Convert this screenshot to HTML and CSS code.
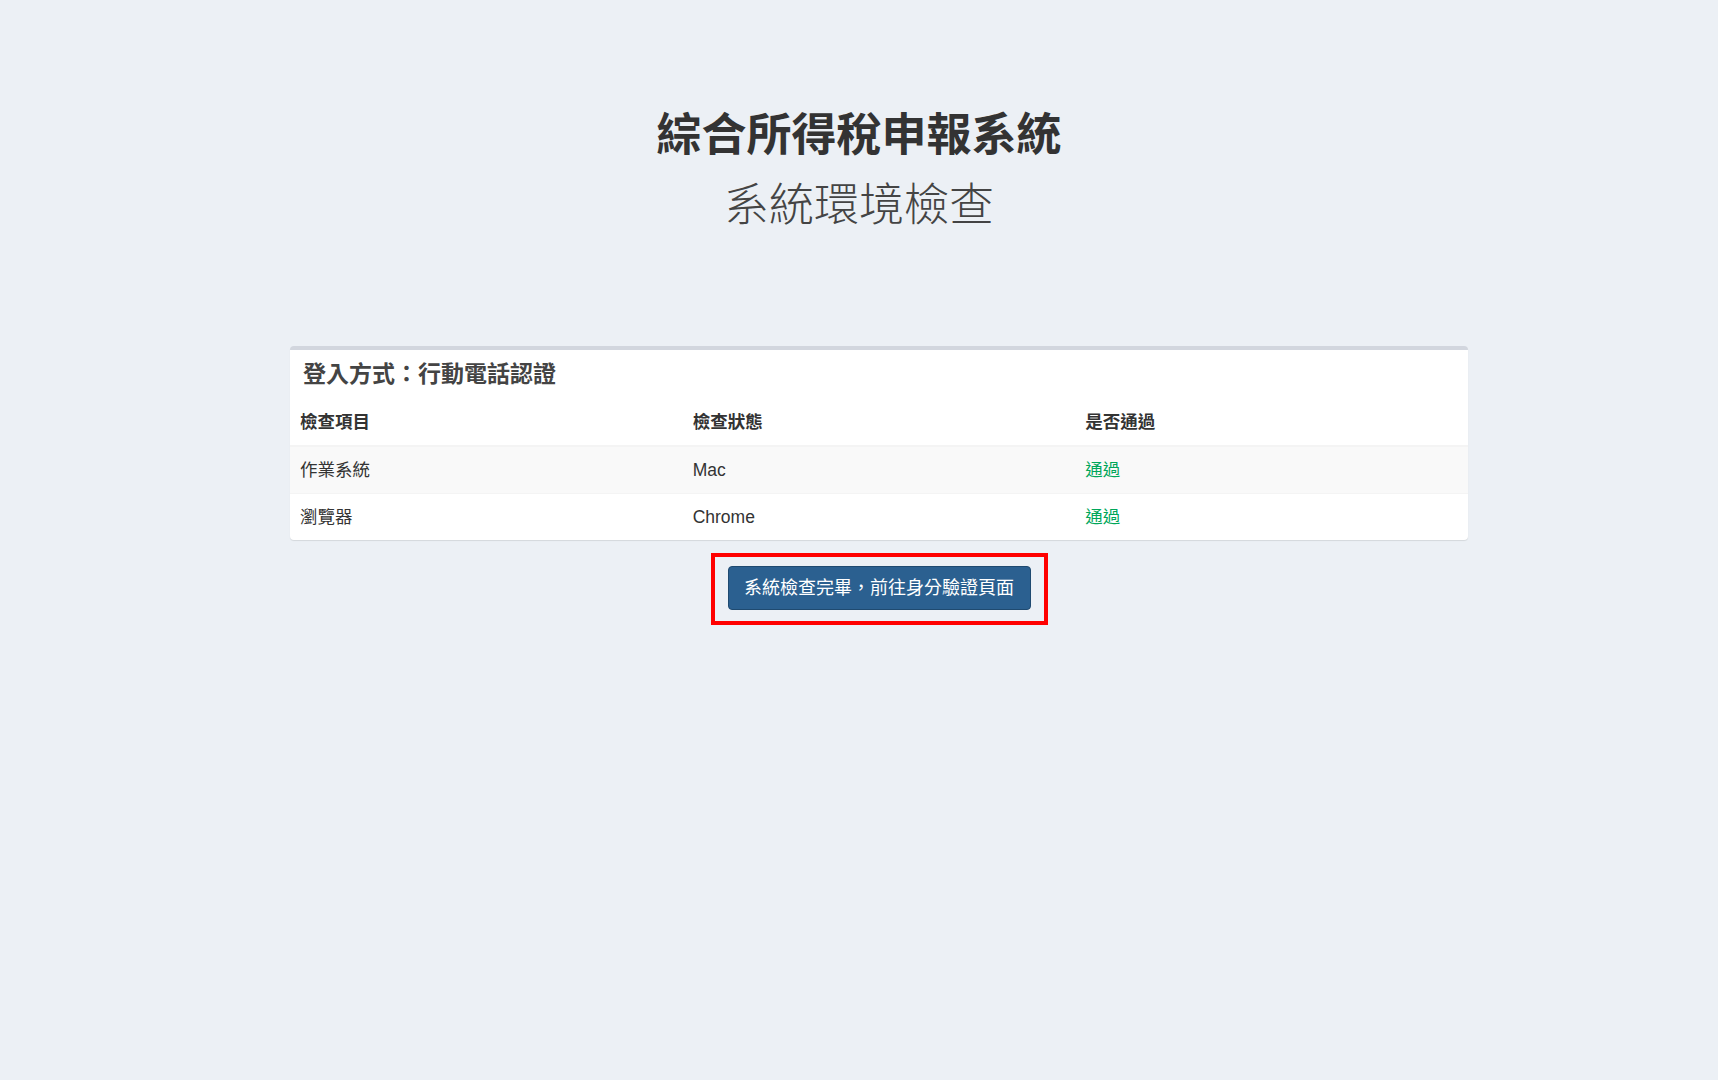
FILE: index.html
```html
<!DOCTYPE html>
<html lang="zh-Hant">
<head>
    <meta charset="UTF-8">
    <meta name="viewport" content="width=device-width, initial-scale=1.0">
    <title>綜合所得稅申報系統 - 系統環境檢查</title>
    <link rel="stylesheet" href="styles.css">
</head>
<body>

<header class="page-header">
    <h1 class="page-title">綜合所得稅申報系統</h1>
    <p class="page-subtitle">系統環境檢查</p>
</header>

<main class="content">
    <section class="box">
        <div class="box-header">
            <h3 class="box-title">登入方式：行動電話認證</h3>
        </div>
        <table class="check-table">
            <thead>
                <tr>
                    <th>檢查項目</th>
                    <th>檢查狀態</th>
                    <th>是否通過</th>
                </tr>
            </thead>
            <tbody>
                <tr>
                    <td>作業系統</td>
                    <td>Mac</td>
                    <td class="text-success">通過</td>
                </tr>
                <tr>
                    <td>瀏覽器</td>
                    <td>Chrome</td>
                    <td class="text-success">通過</td>
                </tr>
            </tbody>
        </table>
    </section>

    <div class="actions">
        <div class="highlight">
            <button type="button" class="btn-primary">系統檢查完畢，前往身分驗證頁面</button>
        </div>
    </div>
</main>

</body>
</html>
```

FILE: styles.css
```css
body {
    font-family: 'Liberation Sans', 'Noto Sans CJK TC', sans-serif;
    background-color: #ecf0f5;
    color: #333;
    margin: 0;
    padding: 0;
    font-size: 17.5px;
}

.page-header {
    text-align: center;
    padding-top: 111px;
}

.page-title {
    font-size: 45px;
    line-height: 50px;
    font-weight: bold;
    color: #333;
    margin: 0;
}

.page-subtitle {
    font-size: 45px;
    line-height: 50px;
    font-weight: 300;
    color: #444;
    margin: 20px 0 0;
}

.content {
    margin: 115px 0 0 290px;
    width: 1178px;
}

.box {
    background-color: #ffffff;
    border-top: 4px solid #d2d6de;
    border-radius: 4px;
    box-shadow: 0 1px 1px rgba(0, 0, 0, 0.1);
}

.box-header {
    padding: 12px 13px 14px;
}

.box-title {
    font-size: 23px;
    line-height: 24px;
    font-weight: 600;
    color: #444;
    margin: 0;
}

.check-table {
    width: 100%;
    border-collapse: collapse;
    table-layout: fixed;
}

.check-table th,
.check-table td {
    text-align: left;
    padding: 10px;
    line-height: 25px;
    font-size: 17.5px;
}

.check-table th {
    font-weight: bold;
    border-bottom: 2px solid #f4f4f4;
}

.check-table td {
    padding: 10.5px 10px;
    border-top: 1px solid #f4f4f4;
}

.check-table tbody tr:nth-child(odd) {
    background-color: #f9f9f9;
}

.text-success {
    color: #00a65a;
}

.actions {
    display: flex;
    justify-content: center;
    margin-top: 13px;
}

.highlight {
    border: 4px solid #ff0000;
    padding: 9px 13px 11px;
}

.btn-primary {
    display: block;
    font-family: 'Liberation Sans', 'Noto Sans CJK TC', sans-serif;
    font-size: 18px;
    line-height: 25px;
    color: #ffffff;
    background-color: #2b6090;
    border: 1px solid #1f4a70;
    border-radius: 4px;
    padding: 8.5px 15.5px;
    cursor: pointer;
}
```
